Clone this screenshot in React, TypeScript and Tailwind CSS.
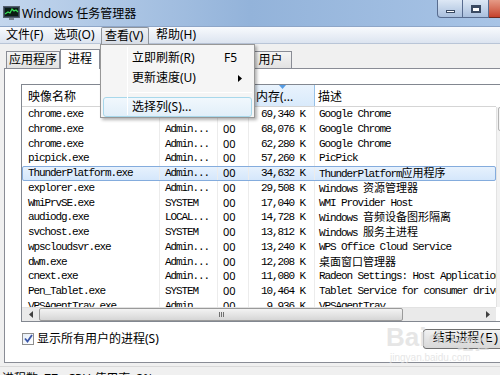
import React from "react";

const ui = { fontFamily: '"Noto Sans", "Noto Sans CJK SC", sans-serif' };
const mono = { fontFamily: '"Liberation Mono", "Noto Sans CJK SC", monospace' };

type Proc = { name: string; user: string; cpu: string; mem: string; desc: string };

const procs: Proc[] = [
  { name: "chrome.exe", user: "Admin...", cpu: "00", mem: "69,340 K", desc: "Google Chrome" },
  { name: "chrome.exe", user: "Admin...", cpu: "00", mem: "68,076 K", desc: "Google Chrome" },
  { name: "chrome.exe", user: "Admin...", cpu: "00", mem: "62,280 K", desc: "Google Chrome" },
  { name: "picpick.exe", user: "Admin...", cpu: "00", mem: "57,260 K", desc: "PicPick" },
  { name: "ThunderPlatform.exe", user: "Admin...", cpu: "00", mem: "34,632 K", desc: "ThunderPlatform应用程序" },
  { name: "explorer.exe", user: "Admin...", cpu: "00", mem: "29,508 K", desc: "Windows 资源管理器" },
  { name: "WmiPrvSE.exe", user: "SYSTEM", cpu: "00", mem: "17,040 K", desc: "WMI Provider Host" },
  { name: "audiodg.exe", user: "LOCAL...", cpu: "00", mem: "14,728 K", desc: "Windows 音频设备图形隔离" },
  { name: "svchost.exe", user: "SYSTEM", cpu: "00", mem: "13,812 K", desc: "Windows 服务主进程" },
  { name: "wpscloudsvr.exe", user: "Admin...", cpu: "00", mem: "13,240 K", desc: "WPS Office Cloud Service" },
  { name: "dwm.exe", user: "Admin...", cpu: "00", mem: "12,208 K", desc: "桌面窗口管理器" },
  { name: "cnext.exe", user: "Admin...", cpu: "00", mem: "11,080 K", desc: "Radeon Settings: Host Application" },
  { name: "Pen_Tablet.exe", user: "SYSTEM", cpu: "00", mem: "10,464 K", desc: "Tablet Service for consumer driver" },
  { name: "VPSAgentTray.exe", user: "Admin...", cpu: "00", mem: "9,936 K", desc: "VPSAgentTray" },
];

// mixed latin/CJK text: latin squeezed to SimSun-like widths, CJK kept normal
function Mixed({ text }: { text: string }) {
  const parts = text.split(/([\u4e00-\u9fff]+)/);
  return (
    <span className="whitespace-pre">
      {parts.map((p, i) =>
        /[\u4e00-\u9fff]/.test(p) ? (
          <span key={i} className="tracking-normal" style={{ fontFamily: '"Noto Sans CJK SC", sans-serif' }}>
            {p}
          </span>
        ) : (
          <span key={i}>{p}</span>
        )
      )}
    </span>
  );
}

function TitleIcon() {
  return (
    <svg width="17" height="14" viewBox="0 0 17 14">
      <rect x="0.5" y="0.5" width="16" height="11" fill="#2c3a4a" stroke="#55606c" />
      <rect x="2" y="2" width="13" height="8" fill="#0b1d12" />
      <polyline points="2,8 5,6 7,7 9,3 11,5 13,4 15,6" fill="none" stroke="#3be05a" strokeWidth="1.2" />
      <rect x="6" y="12" width="5" height="2" fill="#7a8590" />
    </svg>
  );
}

export default function App() {
  return (
    <div className="relative w-[500px] h-[375px] overflow-hidden bg-[#f0f0f0] text-black" style={ui}>
      {/* title bar */}
      <div className="relative h-[27px] bg-gradient-to-r from-[#c3d6ed] via-[#93b3da] to-[#a8c4e6] border-b border-[#8ea6c8]">
        <div className="flex items-center h-full pl-[3px] gap-[2px]">
          <TitleIcon />
          <span className="text-[12px] leading-none pt-[1px]">Windows 任务管理器</span>
        </div>
        <div className="absolute top-0 left-[437px] flex">
          <div className="w-[26px] h-[18px] rounded-bl-[4px] border border-t-0 border-[#586c8f] bg-gradient-to-b from-[#dde8f5] to-[#a9bfdd] flex items-center justify-center">
            <div className="w-[9px] h-[3px] border border-[#3a4a62] bg-white mt-[5px]" />
          </div>
          <div className="w-[26px] h-[18px] border border-t-0 border-l-0 border-[#586c8f] bg-gradient-to-b from-[#dde8f5] to-[#a9bfdd] flex items-center justify-center">
            <div className="w-[10px] h-[8px] border-[2px] border-t-[3px] border-[#3a4a62] bg-white" />
          </div>
          <div className="w-[40px] h-[18px] border border-t-0 border-l-0 border-[#6d2a20] bg-gradient-to-b from-[#e59a86] to-[#c5412c]" />
        </div>
      </div>

      {/* menu bar */}
      <div className="h-[17px] flex items-center text-[12px] bg-gradient-to-b from-[#f8fafd] to-[#dce4f0] border-b border-[#b9c5d7]">
        <span className="pl-[6px] w-[54px]">文件(F)</span>
        <span className="w-[47px]">选项(O)</span>
        <span className="h-[17px] w-[48px] pl-[3px] border border-b-0 border-[#8e949c] rounded-t-[2px] bg-gradient-to-b from-[#eef1f5] to-[#d7dde6] leading-[16px]">
          查看(V)
        </span>
        <span className="pl-[7px]">帮助(H)</span>
      </div>

      {/* tabs */}
      <div className="h-[24px] flex items-end pl-[6px] text-[12px]">
        <div className="h-[17px] w-[54px] border border-b-0 border-[#898c95] bg-gradient-to-b from-[#f4f4f4] to-[#e2e2e2] text-center leading-[16px]">
          应用程序
        </div>
        <div className="relative z-10 h-[20px] w-[40px] -mb-[1px] border border-b-0 border-[#898c95] bg-white text-center leading-[18px]">
          进程
        </div>
        <div className="h-[17px] w-[50px] border border-b-0 border-l-0 border-[#898c95] bg-[#ebebeb] text-center leading-[16px]">服务</div>
        <div className="h-[17px] w-[50px] border border-b-0 border-l-0 border-[#898c95] bg-[#ebebeb] text-center leading-[16px]">性能</div>
        <div className="h-[17px] w-[50px] border border-b-0 border-l-0 border-[#898c95] bg-[#ebebeb] text-center leading-[16px]">联网</div>
        <div className="h-[17px] w-[42px] border border-b-0 border-l-0 border-[#898c95] bg-gradient-to-b from-[#f4f4f4] to-[#e2e2e2] text-center leading-[16px]">
          用户
        </div>
      </div>

      {/* tab page */}
      <div className="relative ml-[4px] w-[520px] h-[295px] border border-[#898c95] bg-white">
        {/* list view */}
        <div className="ml-[16px] mt-[15px] w-[520px] h-[238px] border border-[#828790] flex flex-col">
          <div className="flex w-[474px] h-[22px] border-b border-[#d5d5d5] text-[12px]">
            <div className="w-[138px] pl-[6px] pt-[3px] border-r border-[#e5e5e5]">映像名称</div>
            <div className="w-[58px] pl-[4px] pt-[3px] border-r border-[#e5e5e5]">用户名</div>
            <div className="w-[31px] pl-[3px] pt-[3px] border-r border-[#e5e5e5]">CPU</div>
            <div className="relative w-[66px] pl-[6px] pt-[3px] border-x border-[#97c1e8] bg-gradient-to-b from-[#e9f3fd] to-[#d9eafb]">
              内存(...
              <svg className="absolute top-0 left-[29px]" width="7" height="4" viewBox="0 0 7 4">
                <path d="M0 0 L7 0 L3.5 4 Z" fill="#569de5" />
              </svg>
            </div>
            <div className="flex-1 pl-[3px] pt-[3px]">描述</div>
          </div>
          <div className="flex flex-1">
            <div className="w-[474px] h-[200px] overflow-hidden text-[11px] tracking-[-1.1px]" style={mono}>
              {procs.map((p, i) => (
                <div
                  key={i}
                  className={
                    "flex items-center h-[14.75px] whitespace-nowrap " +
                    (i === 4 ? "bg-gradient-to-b from-[#e8f2fd] to-[#d3e6fb] outline outline-1 -outline-offset-1 outline-[#84acdd] rounded-[2px]" : "")
                  }
                >
                  <div className="w-[138px] pl-[6px] border-r border-[#ececec] h-full flex items-center">{p.name}</div>
                  <div className="w-[58px] pl-[5px] border-r border-[#ececec] h-full flex items-center">{p.user}</div>
                  <div className="w-[31px] pl-[5px] border-r border-[#ececec] h-full flex items-center tracking-normal" style={ui}>
                    {p.cpu}
                  </div>
                  <div className="w-[66px] pr-[9px] border-r border-[#ececec] h-full flex items-center justify-end">{p.mem}</div>
                  <div className="flex-1 pl-[4px] h-full flex items-center overflow-hidden">
                    <Mixed text={p.desc} />
                  </div>
                </div>
              ))}
            </div>
            <div className="w-[17px] border-l border-[#e3e3e3] bg-[#f2f2f2] flex flex-col">
              <div className="h-[24px] border border-[#b4b4b4] rounded-[2px] bg-gradient-to-r from-[#f6f6f6] to-[#dedede] mx-[1px]" />
            </div>
          </div>
          {/* horizontal scrollbar */}
          <div className="h-[15px] w-[474px] flex items-center bg-[#eaeaea] border-t border-[#e2e2e2]">
            <div className="w-[17px] flex justify-center">
              <svg width="4" height="7" viewBox="0 0 4 7"><path d="M4 0 L0 3.5 L4 7 Z" fill="#404040" /></svg>
            </div>
            <div className="w-[364px] h-[13px] rounded-[2px] border border-[#9a9a9a] bg-gradient-to-b from-[#f3f3f3] to-[#d6d6d6] flex items-center justify-center">
              <div className="flex gap-[1px]">
                <div className="w-[1px] h-[5px] bg-[#707070]" />
                <div className="w-[1px] h-[5px] bg-[#707070]" />
                <div className="w-[1px] h-[5px] bg-[#707070]" />
              </div>
            </div>
            <div className="flex-1" />
            <div className="w-[17px] flex justify-center">
              <svg width="4" height="7" viewBox="0 0 4 7"><path d="M0 0 L4 3.5 L0 7 Z" fill="#404040" /></svg>
            </div>
          </div>
        </div>

        {/* bottom row */}
        <div className="flex items-center h-[21px] mt-[6px] pl-[17px]">
          <div className="w-[12px] h-[12px] border border-[#8f8f8f] bg-gradient-to-br from-[#e6eef7] to-[#ffffff] flex items-center justify-center">
            <svg width="9" height="9" viewBox="0 0 9 9">
              <path d="M1 4.5 L3.5 7.5 L8 1" fill="none" stroke="#3a56a8" strokeWidth="1.8" />
            </svg>
          </div>
          <span className="ml-[3px] text-[12px]">显示所有用户的进程(S)</span>
          <div
            className="ml-[264px] w-[90px] h-[20px] rounded-[3px] border border-[#707070] bg-gradient-to-b from-[#f2f2f2] to-[#d8d8d8] text-[12px] pl-[9px] leading-[18px] tracking-[-0.5px]"
            style={mono}
          >
            结束进程(E)
          </div>
        </div>

        {/* watermark */}
        <div className="absolute left-[381px] top-[255px] pointer-events-none text-[#dcdcdc] opacity-70" style={{ fontFamily: '"Liberation Sans", sans-serif' }}>
          <div className="flex items-end">
            <span className="text-[26px] font-bold leading-none">Bai</span>
            <span className="text-[22px] font-bold leading-none ml-[2px]">du</span>
            <span className="text-[16px] font-bold leading-none ml-[2px]" style={{ fontFamily: '"Noto Sans CJK SC", sans-serif' }}>经验</span>
          </div>
          <div className="text-[10px] leading-none mt-[3px] ml-[4px]">jingyan.baidu.com</div>
        </div>
      </div>

      {/* status bar */}
      <div className="mt-[3px] pl-[2px] text-[12px] leading-none border-t border-[#d9d9d9] pt-[6px]">进程数: 77&nbsp;&nbsp;&nbsp;CPU 使用率: 3%</div>

      {/* open "查看" menu */}
      <div className="absolute left-[100px] top-[44px] w-[155px] h-[74px] border border-[#979797] bg-[#f5f5f5] text-[12px] shadow-[2px_2px_3px_rgba(0,0,0,0.3)]">
        <div className="absolute left-[26px] top-[2px] bottom-[2px] w-[1px] bg-[#e2e3e3] border-r border-white" />
        <div className="flex items-center h-[20px] mt-[3px] pl-[31px]">
          <span className="flex-1">立即刷新(R)</span>
          <span className="w-[30px]">F5</span>
        </div>
        <div className="flex items-center h-[20px] pl-[31px]">
          <span className="flex-1">更新速度(U)</span>
          <svg className="mr-[12px]" width="4" height="7" viewBox="0 0 4 7"><path d="M0 0 L4 3.5 L0 7 Z" fill="#000" /></svg>
        </div>
        <div className="ml-[28px] mr-[2px] my-[4px] h-[1px] bg-[#e0e0e0] border-b border-white" />
        <div className="mx-[2px] h-[20px] rounded-[3px] border border-[#a8d8eb] bg-gradient-to-b from-[#f1f8fd] to-[#e1eff9] pl-[28px] leading-[18px]">
          选择列(S)...
        </div>
      </div>
    </div>
  );
}
